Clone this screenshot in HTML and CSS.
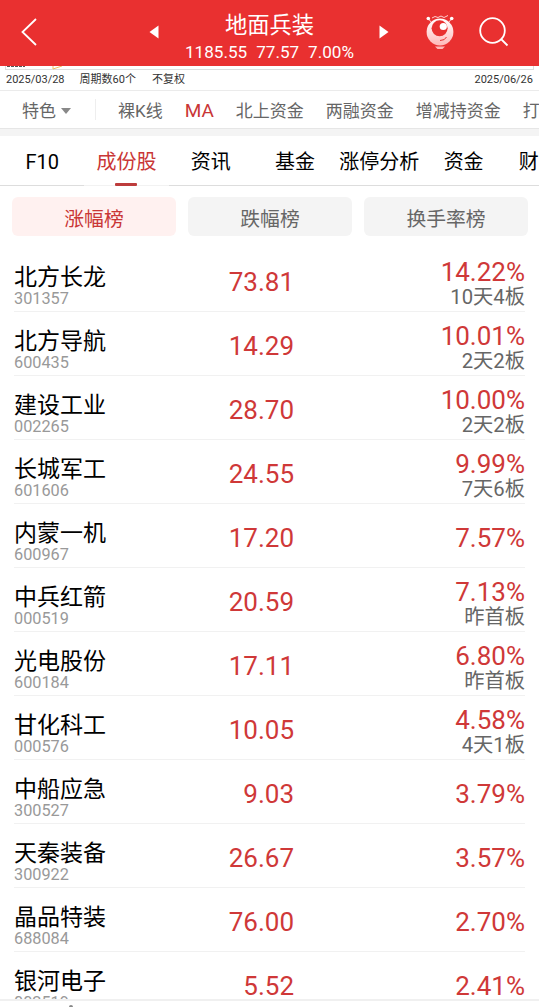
FILE: index.html
```html
<!DOCTYPE html>
<html lang="zh-CN">
<head>
    <meta charset="UTF-8">
    <meta name="viewport" content="width=device-width, initial-scale=1.0">
    <title>地面兵装</title>
    <link rel="stylesheet" href="styles.css">
</head>
<body>

    <header class="header">
        <svg class="back" width="16" height="28" viewBox="0 0 16 28"><path d="M15 1L1.5 14L15 27"/></svg>
        <svg class="prev" width="10" height="14" viewBox="0 0 10 14"><path d="M0.5 7L9.500 0.5V13.500Z"/></svg>
        <div class="heading">
            <h1>地面兵装</h1>
            <p><span>1185.55</span><span>77.57</span><span>7.00%</span></p>
        </div>
        <svg class="next" width="10" height="14" viewBox="0 0 10 14"><path d="M9.500 7L0.5 0.5V13.500Z"/></svg>
        <svg class="robot" width="28" height="36" viewBox="0 0 28 36">
            <defs>
                <linearGradient id="face" x1="0" y1="0" x2="0" y2="1">
                    <stop offset="0" stop-color="#fff"/>
                    <stop offset="1" stop-color="#ffb9b9"/>
                </linearGradient>
            </defs>
            <path class="antenna" d="M2.5 5L6 9M25.5 5L22 9M6 4L9 2.5L12 3.5L15 2L18 3.5L22 1.5"/>
            <circle cx="2.3" cy="4.5" r="1.8" fill="#fff"/>
            <circle cx="25.7" cy="4.5" r="1.8" fill="#fff"/>
            <circle cx="14" cy="18" r="13.4" fill="url(#face)"/>
            <circle cx="13.6" cy="14.3" r="8" fill="#e93030"/>
            <circle cx="17.3" cy="12.5" r="3.6" fill="#fff"/>
            <path class="smile" d="M14 26.500Q19 26.500 20.500 23"/>
            <path d="M9 32.500H19L16.500 35H11.500Z" fill="#ffb9b9"/>
        </svg>
        <svg class="search" width="30" height="30" viewBox="0 0 30 30"><circle cx="13.500" cy="13.500" r="12.300"/><path d="M22 22L28.500 28.500"/></svg>
    </header>

    <div class="chart">
        <div class="chart-end"></div>
        <svg class="chart-mark" width="80" height="4" viewBox="0 0 80 4"><path d="M7 0.5H25" stroke="#555" stroke-dasharray="3 1"/><path d="M53 0V3L62 0" stroke="#efbd62"/></svg>
        <div class="dates">
            <span>2025/03/28</span><span class="period">周期数60个</span><span>不复权</span>
            <span class="date-end">2025/06/26</span>
        </div>
    </div>

    <nav class="filters">
        <span class="special">特色<i class="caret"></i></span>
        <span>裸K线</span>
        <span class="active">MA</span>
        <span>北上资金</span>
        <span>两融资金</span>
        <span>增减持资金</span>
        <span>打</span>
    </nav>

    <nav class="tabs">
        <span>F10</span>
        <span class="active">成份股</span>
        <span>资讯</span>
        <span>基金</span>
        <span>涨停分析</span>
        <span>资金</span>
        <span class="last">财</span>
    </nav>

    <div class="ranks">
        <button type="button" class="active">涨幅榜</button>
        <button type="button">跌幅榜</button>
        <button type="button">换手率榜</button>
    </div>

    <main class="stocks">
        <div class="stock">
            <div class="name">北方长龙<small>301357</small></div>
            <div class="price">73.81</div>
            <div class="change">14.22%<small>10天4板</small></div>
        </div>
        <div class="stock">
            <div class="name">北方导航<small>600435</small></div>
            <div class="price">14.29</div>
            <div class="change">10.01%<small>2天2板</small></div>
        </div>
        <div class="stock">
            <div class="name">建设工业<small>002265</small></div>
            <div class="price">28.70</div>
            <div class="change">10.00%<small>2天2板</small></div>
        </div>
        <div class="stock">
            <div class="name">长城军工<small>601606</small></div>
            <div class="price">24.55</div>
            <div class="change">9.99%<small>7天6板</small></div>
        </div>
        <div class="stock">
            <div class="name">内蒙一机<small>600967</small></div>
            <div class="price">17.20</div>
            <div class="change single">7.57%</div>
        </div>
        <div class="stock">
            <div class="name">中兵红箭<small>000519</small></div>
            <div class="price">20.59</div>
            <div class="change">7.13%<small>昨首板</small></div>
        </div>
        <div class="stock">
            <div class="name">光电股份<small>600184</small></div>
            <div class="price">17.11</div>
            <div class="change">6.80%<small>昨首板</small></div>
        </div>
        <div class="stock">
            <div class="name">甘化科工<small>000576</small></div>
            <div class="price">10.05</div>
            <div class="change">4.58%<small>4天1板</small></div>
        </div>
        <div class="stock">
            <div class="name">中船应急<small>300527</small></div>
            <div class="price">9.03</div>
            <div class="change single">3.79%</div>
        </div>
        <div class="stock">
            <div class="name">天秦装备<small>300922</small></div>
            <div class="price">26.67</div>
            <div class="change single">3.57%</div>
        </div>
        <div class="stock">
            <div class="name">晶品特装<small>688084</small></div>
            <div class="price">76.00</div>
            <div class="change single">2.70%</div>
        </div>
        <div class="stock">
            <div class="name">银河电子<small>002519</small></div>
            <div class="price">5.52</div>
            <div class="change single">2.41%</div>
        </div>
    </main>

    <footer class="footer"><i></i></footer>

</body>
</html>
```

FILE: styles.css
```css
* {
    box-sizing: border-box;
}

body {
    margin: 0;
    height: 1007px;
    display: flex;
    flex-direction: column;
    overflow: hidden;
    background-color: #fff;
    font-family: Roboto, "Noto Sans CJK SC", sans-serif;
    color: #000;
}

svg {
    display: block;
    flex: none;
}

/* header */
.header {
    height: 66px;
    flex: none;
    display: flex;
    align-items: center;
    padding-left: 21px;
    background-color: #e93030;
    color: #fff;
}

.back,
.search {
    fill: none;
    stroke: #fff;
    stroke-width: 1.8;
}

.back {
    margin-top: -2px;
}

.prev,
.next {
    margin-top: -2px;
    fill: #fff;
}

.prev {
    margin-left: 112px;
}

.heading {
    width: 220px;
    padding: 7px 0 0 1px;
    text-align: center;
}

.heading h1 {
    margin: 0;
    font-size: 22.3px;
    line-height: 30px;
    font-weight: 400;
}

.heading p {
    display: flex;
    justify-content: center;
    gap: 9px;
    margin: 0;
    font-size: 17.1px;
    line-height: 24px;
}

.robot {
    margin: -2px 0 0 37px;
}

.search {
    margin: -2px 0 0 25px;
}

.antenna,
.smile {
    fill: none;
    stroke: #ffd0d0;
    stroke-width: 1;
}

.smile {
    stroke: #e93030;
}

/* bottom of the chart */
.chart {
    position: relative;
    height: 25px;
    flex: none;
    border-bottom: 1px solid #ebebeb;
}

.chart-end {
    height: 4px;
    margin: 0 5px;
    border: 1px solid #ddd;
    border-top: none;
}

.chart-mark {
    position: absolute;
    top: 0;
    left: 0;
    fill: none;
}

.dates {
    display: flex;
    padding: 0 6px;
    font-size: 11px;
    line-height: 19px;
    color: #333;
}

.period {
    margin: 0 16px 0 15px;
}

.date-end {
    margin-left: auto;
}

/* indicator filters */
.filters {
    height: 38px;
    flex: none;
    display: flex;
    align-items: center;
    gap: 22px;
    overflow: hidden;
    border-bottom: 1px solid #e6e6e6;
    font-size: 17px;
    color: #666;
    white-space: nowrap;
}

.filters span {
    flex: none;
}

.filters .special {
    width: 96px;
    height: 21px;
    display: flex;
    align-items: center;
    padding-left: 22px;
    border-right: 1px solid #eee;
}

.caret {
    margin: 3px 0 0 5px;
    border: 5px solid transparent;
    border-top: 6px solid #888;
    border-bottom: 0;
}

.filters .active {
    padding-top: 1px;
    font-size: 19px;
    color: #c93636;
}

/* tabs */
.tabs {
    height: 57px;
    flex: none;
    display: flex;
    overflow: hidden;
    border-top: 7px solid #f4f4f4;
    font-size: 20px;
    white-space: nowrap;
}

.tabs span {
    width: 84.3px;
    flex: none;
    padding-top: 4px;
    line-height: 45px;
    text-align: center;
    border-bottom: 1px solid #ddd;
}

.tabs .last {
    padding-left: 13px;
    text-align: left;
}

.tabs .active {
    position: relative;
    border-color: #f2f2f2;
    color: #c93636;
}

.tabs .active::after {
    content: "";
    position: absolute;
    left: 31px;
    bottom: -1px;
    width: 22px;
    height: 3px;
    border-radius: 1px;
    background-color: #bd3c3c;
}

/* rank buttons */
.ranks {
    flex: none;
    display: flex;
    gap: 12px;
    padding: 11px 11px 12px 12px;
}

.ranks button {
    flex: 1;
    height: 39px;
    padding: 1px 0 0;
    border: none;
    border-radius: 6px;
    background-color: #f4f4f4;
    color: #666;
    font-family: inherit;
    font-size: 19.8px;
}

.ranks .active {
    background-color: #fff1f0;
    color: #c93636;
}

/* stock list */
.stocks {
    height: 751px;
    flex: none;
    overflow: hidden;
    padding: 0 14px;
}

.stock {
    height: 64px;
    display: grid;
    grid-template-columns: 140px 140px 1fr;
    border-bottom: 1px solid #f1f1f1;
}

.stock small {
    display: block;
}

.name {
    padding-top: 15px;
    font-size: 23px;
    line-height: 30px;
}

.name small {
    margin-top: -2px;
    font-size: 16.3px;
    line-height: 16px;
    color: #999;
}

.price,
.change {
    text-align: right;
    font-size: 26px;
    color: #cf3838;
}

.price {
    line-height: 69px;
}

.change {
    padding-top: 9px;
    line-height: 30px;
}

.change.single {
    padding-top: 0;
    line-height: 69px;
}

.change small {
    font-size: 20.3px;
    line-height: 20px;
    color: #666;
}

.footer {
    height: 8px;
    flex: none;
    border-top: 2px solid #f0f0f0;
}

.footer i {
    display: block;
    width: 4px;
    height: 2px;
    margin: 4px 0 0 69px;
    border-radius: 2px 2px 0 0;
    background-color: #888;
}
```
